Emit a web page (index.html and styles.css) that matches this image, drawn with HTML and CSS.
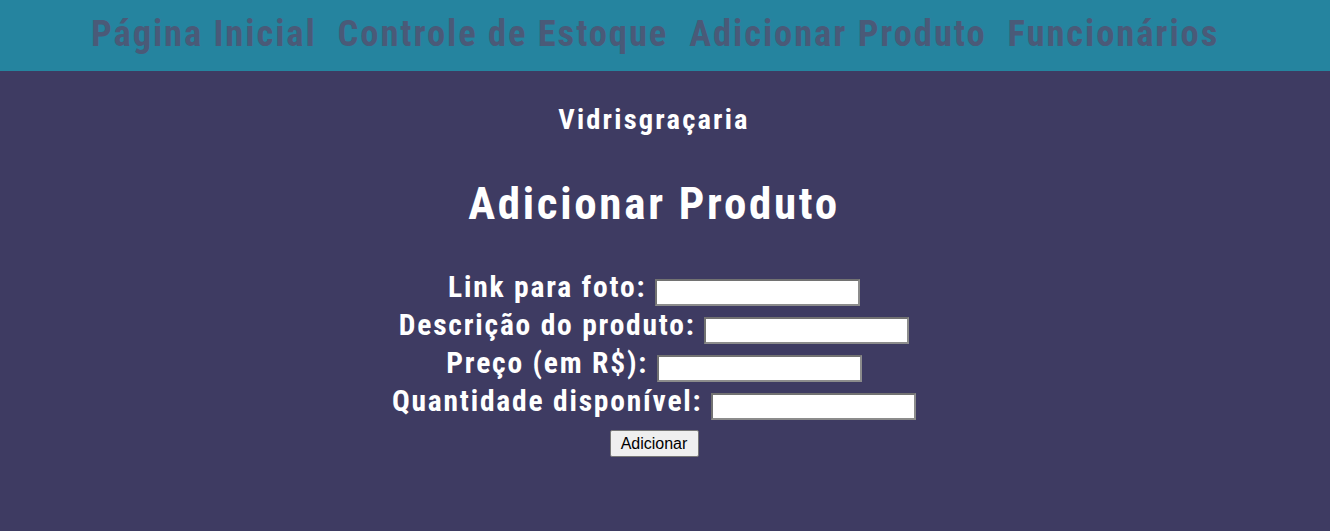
FILE: index.html
```html
<!DOCTYPE html>
<html lang="pt-BR">
<head>
<meta charset="utf-8">
<title>Adicionar Produto</title>
<link rel="stylesheet" href="styles.css">
</head>
<body>
<header class="topbar">
  <nav class="nav">
    <a class="nav-link" href="#">Página Inicial</a>
    <a class="nav-link" href="#">Controle de Estoque</a>
    <a class="nav-link" href="#">Adicionar Produto</a>
    <a class="nav-link" href="#">Funcionários</a>
  </nav>
</header>
<main class="content">
  <p class="brand">Vidrisgraçaria</p>
  <h1 class="title">Adicionar Produto</h1>
  <form class="form">
    <div class="row"><label class="label">Link para foto:</label> <input class="field" type="text"></div>
    <div class="row"><label class="label">Descrição do produto:</label> <input class="field" type="text"></div>
    <div class="row"><label class="label">Preço (em R$):</label> <input class="field" type="text"></div>
    <div class="row"><label class="label">Quantidade disponível:</label> <input class="field" type="text"></div>
    <div class="actions"><button class="btn" type="button">Adicionar</button></div>
  </form>
</main>
</body>
</html>
```
FILE: styles.css
```css
html, body {
  margin: 0;
  padding: 0;
}
body {
  background: #3e3b62;
  color: #ffffff;
  font-family: "Roboto Condensed", Roboto, "Liberation Sans", sans-serif;
  font-weight: bold;
  height: 531px;
}
.topbar {
  background: #25849f;
  height: 71px;
  box-sizing: border-box;
}
.nav {
  display: flex;
  gap: 21px;
  padding-left: 91px;
  padding-top: 12px;
}
.nav-link {
  color: #4a5a78;
  text-decoration: none;
  font-size: 36.5px;
  line-height: 43px;
  letter-spacing: 1.95px;
}
.content {
  padding-right: 22px;
  text-align: center;
}
.brand {
  margin: 32px 0 0;
  font-size: 28.5px;
  line-height: 34px;
  letter-spacing: 2.2px;
}
.title {
  margin: 42px 0 0;
  font-size: 45px;
  line-height: 50px;
  font-weight: bold;
  letter-spacing: 2.7px;
}
.form {
  margin: 39px 0 0;
}
.row {
  font-size: 29.5px;
  line-height: 38px;
  letter-spacing: 1.8px;
}
.field {
  width: 205px;
  height: 27px;
  box-sizing: border-box;
  border-style: solid;
  border-width: 2px;
  border-color: #727272 #8c8c8c #8c8c8c #727272;
  background: #ffffff;
  font-size: 16px;
  padding: 1px 2px;
  margin: 0;
  letter-spacing: 0;
}
.actions {
  margin-top: 10px;
  line-height: 0;
}
.btn {
  font-family: "Liberation Sans", Arial, sans-serif;
  font-weight: normal;
  letter-spacing: 0;
  font-size: 16px;
  color: #000;
  background: #efefef;
  border: 1px solid #767676;
  border-radius: 2px;
  padding: 2px 8px;
  width: 89px;
  height: 27px;
  box-sizing: border-box;
}
```
